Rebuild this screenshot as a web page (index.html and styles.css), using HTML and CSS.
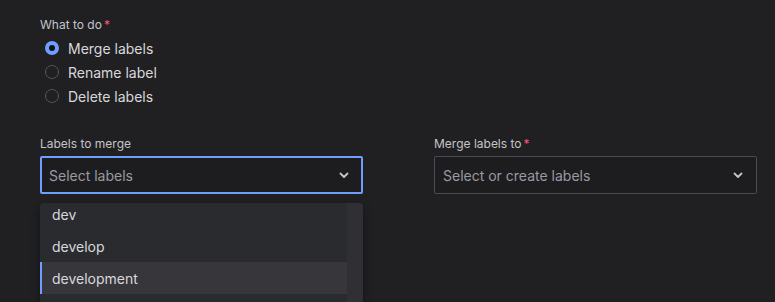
FILE: index.html
```html
<!DOCTYPE html>
<html lang="en">
<head>
    <meta charset="UTF-8">
    <meta name="viewport" content="width=device-width, initial-scale=1.0">
    <title>Merge labels</title>

    <link rel="stylesheet" href="styles.css">
</head>
<body>

    <div class="page">

        <div class="field">
            <p class="field-label">What to do<span class="req">*</span></p>
            <div class="radio-list">
                <label class="radio checked"><span class="dot"></span>Merge labels</label>
                <label class="radio"><span class="dot"></span>Rename label</label>
                <label class="radio"><span class="dot"></span>Delete labels</label>
            </div>
        </div>

        <div class="row">
            <div class="col">
                <p class="field-label">Labels to merge</p>
                <div class="select focused">
                    <span class="placeholder">Select labels</span>
                    <svg class="chevron" width="16" height="16" viewBox="0 0 16 16"><path d="M4.5 6.5 8 10l3.5-3.5" fill="none" stroke="currentColor" stroke-width="1.8" stroke-linecap="round" stroke-linejoin="round"/></svg>
                </div>
                <div class="menu">
                    <div class="menu-list">
                        <div class="option">dev</div>
                        <div class="option">develop</div>
                        <div class="option active">development</div>
                    </div>
                    <div class="scroll-track"></div>
                </div>
            </div>

            <div class="col">
                <p class="field-label">Merge labels to<span class="req">*</span></p>
                <div class="select">
                    <span class="placeholder">Select or create labels</span>
                    <svg class="chevron" width="16" height="16" viewBox="0 0 16 16"><path d="M4.5 6.5 8 10l3.5-3.5" fill="none" stroke="currentColor" stroke-width="1.8" stroke-linecap="round" stroke-linejoin="round"/></svg>
                </div>
            </div>
        </div>

    </div>

</body>
</html>
```

FILE: styles.css
```css
body{
    margin: 0;
    background-color: #202022;
    color: #d0d0d6;
    font-family: Inter, "Noto Sans", sans-serif;
    overflow: hidden;
}
.page{
    padding: 16px 19px 0 40px;
}
.field-label{
    margin: 0 0 2px 0;
    font-size: 12px;
    font-weight: 400;
    color: #c4c4ca;
    line-height: 18px;
}
.req{
    color: #ff5286;
    margin-left: 2px;
}
.radio-list{
    display: flex;
    flex-direction: column;
    padding-left: 5px;
}
.radio{
    display: flex;
    align-items: center;
    height: 24px;
    font-size: 14px;
    color: #d8d8dc;
}
.dot{
    box-sizing: border-box;
    width: 14px;
    height: 14px;
    border-radius: 50%;
    border: 1px solid #55555b;
    margin-right: 9px;
}
.radio.checked .dot{
    border: 4px solid #6e9fff;
    background-color: #111114;
}
.row{
    display: grid;
    grid-template-columns: 323px 323px;
    column-gap: 71px;
    margin-top: 27px;
}
.col > .field-label{
    margin-bottom: 3px;
}
.select{
    box-sizing: border-box;
    height: 38px;
    display: flex;
    align-items: center;
    justify-content: space-between;
    padding: 0 10px 0 8px;
    border: 1px solid #4b4b52;
    border-radius: 2px;
    background-color: #1d1d20;
    font-size: 14px;
}
.select.focused{
    border: 2px solid #6e9fff;
    padding-left: 7px;
    padding-right: 9px;
}
.placeholder{
    color: #9a9aa2;
}
.chevron{
    color: #c4c4ca;
}
.menu{
    position: relative;
    margin-top: 9px;
    width: 323px;
    height: 99px;
    overflow: hidden;
    display: flex;
    background-color: #2a2b2f;
    border-radius: 4px 4px 0 0;
    box-shadow: 0 4px 8px rgba(0, 0, 0, 0.4);
}
.menu-list{
    flex: 1;
    margin-top: -5px;
}
.option{
    box-sizing: border-box;
    height: 32px;
    display: flex;
    align-items: center;
    font-size: 14px;
    color: #d8d8dc;
    border-left: 2px solid transparent;
    padding-left: 10px;
}
.option.active{
    background-color: #36363b;
    border-left-color: #6e9fff;
}
.scroll-track{
    width: 16px;
    background-color: #303034;
}
```
